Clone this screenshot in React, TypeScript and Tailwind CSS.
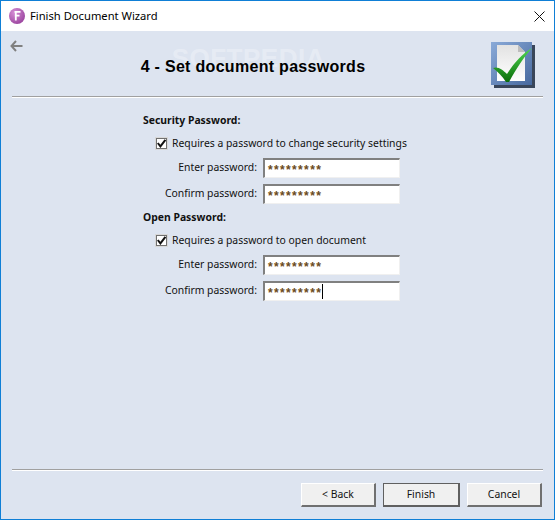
import type React from "react";

const PasswordRow: React.FC<{ label: string; value: string; caret?: boolean }> = ({ label, value, caret }) => {
	return (
		<div className="flex items-center h-[20px]">
			<span className="w-[120px] pr-[6px] text-right text-[10.4px] text-[#111]">{label}</span>
			<div className="w-[137px] h-[20px] bg-white border-t-2 border-l-2 border-t-[#808080] border-l-[#808080] border-r border-b border-r-[#f0f0f0] border-b-[#f0f0f0] pl-[3px] flex items-center">
				<span className="font-['Liberation_Sans',sans-serif] text-[12px] font-bold tracking-[1.35px] text-[#6b4a20] leading-none mt-[2px]">{value}</span>
				{caret && <span className="w-px h-[15px] bg-black" />}
			</div>
		</div>
	);
};

const CheckRow: React.FC<{ label: string }> = ({ label }) => {
	return (
		<div className="flex items-center h-[16px] pl-[13px] gap-[5px]">
			<div className="w-[11px] h-[11px] bg-white border border-[#707070] shadow-[0_0_0_1px_#d8d8d8] flex items-center justify-center">
				<svg width="9" height="9" viewBox="0 0 9 9">
					<path d="M0.8 4 L3.4 7.4 L8.4 0.8" fill="none" stroke="#111" strokeWidth="2" />
				</svg>
			</div>
			<span className="mt-[1px] text-[10.4px] text-[#111]">{label}</span>
		</div>
	);
};

const AppLogo: React.FC = () => {
	return (
		<svg width="16" height="16" viewBox="0 0 16 16">
			<defs>
				<radialGradient id="logoBg" cx="0.35" cy="0.3" r="0.8">
					<stop offset="0" stopColor="#d68ed6" />
					<stop offset="1" stopColor="#97409b" />
				</radialGradient>
			</defs>
			<circle cx="8" cy="8" r="8" fill="url(#logoBg)" />
			<path d="M5.5 3.8 H11.5 M5.8 7.6 H10.5 M6.8 3.8 V12.6" fill="none" stroke="#ffffff" strokeWidth="1.8" />
		</svg>
	);
};

const DocCheckIcon: React.FC = () => {
	return (
		<svg width="45" height="47" viewBox="0 0 45 47">
			<defs>
				<linearGradient id="blueBg" x1="0" y1="0" x2="1" y2="1">
					<stop offset="0" stopColor="#8aaad8" />
					<stop offset="1" stopColor="#47699f" />
				</linearGradient>
				<linearGradient id="sheet" x1="0" y1="0" x2="0" y2="1">
					<stop offset="0" stopColor="#e2e2e2" />
					<stop offset="1" stopColor="#ffffff" />
				</linearGradient>
				<linearGradient id="tick" x1="0" y1="0" x2="0" y2="1">
					<stop offset="0" stopColor="#4fd84f" />
					<stop offset="1" stopColor="#0b6d0b" />
				</linearGradient>
			</defs>
			<rect x="3" y="3" width="41" height="43" fill="#39465a" />
			<rect x="0" y="0" width="41" height="43" fill="url(#blueBg)" />
			<path d="M6 3 H27 L34 10 V39 H6 Z" fill="url(#sheet)" />
			<path d="M27 3 L34 10 H27 Z" fill="#bdbdbd" />
			<path d="M2 26 C7 24 12 28 16 32 C23 21 31 12 41 6 C33 15 25 27 18 40 H15 C11 34 7 30 2 26 Z" fill="url(#tick)" />
		</svg>
	);
};

const WizardButton: React.FC<{ label: string; width: string; isDefault?: boolean }> = ({ label, width, isDefault }) => {
	return (
		<button
			type="button"
			className={
				isDefault
					? `${width} h-[24px] pt-[1px] bg-[#f0f0f0] border border-[#606060] border-r-2 border-b-2 text-[10.4px] text-[#111]`
					: `${width} h-[24px] pt-[1px] bg-[#f0f0f0] border border-white border-r-2 border-b-2 border-r-[#707070] border-b-[#707070] text-[10.4px] text-[#111]`
			}
		>
			{label}
		</button>
	);
};

export default function App() {
	return (
		<div className="w-[555px] h-[520px] flex flex-col border border-[#0f7fd6] border-t-0 bg-[#dde4f0] font-['Noto_Sans',sans-serif] overflow-hidden">
			<div className="h-[31px] bg-white flex items-center border-t border-[#0f7fd6] shrink-0">
				<div className="ml-[8px]">
					<AppLogo />
				</div>
				<span className="ml-[5px] text-[11.2px] text-black">Finish Document Wizard</span>
				<svg className="ml-auto mr-[9px]" width="11" height="11" viewBox="0 0 11 11">
					<path d="M0.5 0.5 L10.5 10.5 M10.5 0.5 L0.5 10.5" stroke="#111" strokeWidth="1" />
				</svg>
			</div>

			<div className="relative flex h-[65px] shrink-0 pl-[9px] pr-[18px]">
				<svg className="mt-[9px]" width="13" height="12" viewBox="0 0 13 12">
					<path d="M6 1 L1.5 6 L6 11 M1.5 6 H12.5" fill="none" stroke="#808080" strokeWidth="2" />
				</svg>
				<div className="flex-1 flex justify-center pt-[26px]">
					<h1 className="relative font-['Liberation_Sans',sans-serif] text-[16px] font-bold tracking-[0.3px] text-black leading-[20px] mr-[8px]">
						<span className="absolute left-[31px] top-[-9px] text-[26px] tracking-[0.5px] text-white/30 font-bold select-none">SOFTPEDIA</span>
						<span className="relative">4 - Set document passwords</span>
					</h1>
				</div>
				<div className="mt-[11px]">
					<DocCheckIcon />
				</div>
			</div>

			<div className="mx-[11px] h-[2px] border-t border-[#a0a0a0] border-b-white border-b shrink-0" />

			<div className="flex-1 pl-[142px] pt-[14px] flex flex-col">
				<h2 className="text-[10.4px] font-bold text-[#111] leading-[16px]">Security Password:</h2>
				<div className="mt-[7px]">
					<CheckRow label="Requires a password to change security settings" />
				</div>
				<div className="mt-[7px] flex flex-col gap-[6px]">
					<PasswordRow label="Enter password:" value="*********" />
					<PasswordRow label="Confirm password:" value="*********" />
				</div>
				<h2 className="mt-[5px] text-[10.4px] font-bold text-[#111] leading-[16px]">Open Password:</h2>
				<div className="mt-[7px]">
					<CheckRow label="Requires a password to open document" />
				</div>
				<div className="mt-[7px] flex flex-col gap-[6px]">
					<PasswordRow label="Enter password:" value="*********" />
					<PasswordRow label="Confirm password:" value="*********" caret />
				</div>
			</div>

			<div className="mx-[11px] h-[2px] border-t border-[#a0a0a0] border-b-white border-b shrink-0" />

			<div className="h-[48px] flex justify-end items-start gap-[7px] pt-[12px] pr-[12px] shrink-0">
				<WizardButton label="< Back" width="w-[75px]" />
				<WizardButton label="Finish" width="w-[77px]" isDefault />
				<WizardButton label="Cancel" width="w-[75px]" />
			</div>
		</div>
	);
}
